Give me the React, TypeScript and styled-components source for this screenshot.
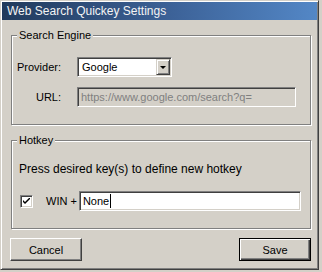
import styled, { createGlobalStyle } from "styled-components";

const GlobalStyle = createGlobalStyle`
  html, body {
    margin: 0;
    padding: 0;
    background: #d4d0c8;
  }
  body {
    font-family: "Liberation Sans", Arial, sans-serif;
    font-size: 11px;
    color: #000;
  }
`;

const Window = styled.div`
  box-sizing: border-box;
  width: 319px;
  height: 270px;
  padding: 1px;
  background: #d4d0c8;
  border: 1px solid;
  border-color: #d4d0c8 #404040 #404040 #d4d0c8;
  box-shadow: inset 1px 1px 0 #fff, inset -1px -1px 0 #808080;
  display: flex;
  flex-direction: column;
`;

const TitleBar = styled.div`
  height: 18px;
  padding-left: 5px;
  display: flex;
  align-items: center;
  background: linear-gradient(to right, #213a5c, #3d6399 55%, #5387c6);
  color: #f4f4f4;
  font-size: 12px;
`;

const Content = styled.div`
  flex: 1;
  display: flex;
  flex-direction: column;
  padding: 9px 6px 0 9px;
`;

const Group = styled.fieldset<{ $top?: number; $pad: string }>`
  margin: ${(p) => p.$top ?? 0}px 0 0 0;
  padding: ${(p) => p.$pad};
  border: 1px solid #808080;
  box-shadow: inset 1px 1px 0 #fff, 1px 1px 0 #fff;
  min-width: 0;
`;

const Legend = styled.legend`
  padding: 0 2px;
  margin-left: -2px;
  background: #d4d0c8;
  line-height: 13px;
`;

const FormGrid = styled.div`
  display: grid;
  grid-template-columns: 42px 1fr;
  column-gap: 16px;
  row-gap: 10px;
  align-items: center;
`;

const Label = styled.span`
  justify-self: end;
  white-space: nowrap;
`;

const sunken = `
  box-sizing: border-box;
  border: 1px solid;
  border-color: #808080 #fff #fff #808080;
  box-shadow: inset 1px 1px 0 #404040, inset -1px -1px 0 #d4d0c8;
`;

const Select = styled.div`
  ${sunken}
  width: 95px;
  height: 20px;
  background: #fff;
  display: flex;
  align-items: center;
  padding: 1px;
`;

const SelectValue = styled.span`
  flex: 1;
  padding-left: 3px;
`;

const DropButton = styled.span`
  box-sizing: border-box;
  width: 14px;
  height: 16px;
  background: #d4d0c8;
  border: 1px solid;
  border-color: #d4d0c8 #404040 #404040 #d4d0c8;
  box-shadow: inset 1px 1px 0 #fff, inset -1px -1px 0 #808080;
  display: flex;
  align-items: center;
  justify-content: center;
`;

const Arrow = styled.span`
  width: 0;
  height: 0;
  border-left: 3px solid transparent;
  border-right: 3px solid transparent;
  border-top: 3px solid #000;
  margin-top: 1px;
`;

const TextBox = styled.div<{ $disabled?: boolean; $width?: number }>`
  ${sunken}
  ${(p) => (p.$width ? `width: ${p.$width}px;` : "flex: 1;")}
  height: 20px;
  background: ${(p) => (p.$disabled ? "#d4d0c8" : "#fff")};
  color: ${(p) => (p.$disabled ? "#808080" : "#000")};
  display: flex;
  align-items: center;
  padding-left: 3px;
  white-space: nowrap;
  overflow: hidden;
`;

const Caret = styled.span`
  display: inline-block;
  width: 1px;
  height: 14px;
  background: #000;
  margin-left: 1px;
`;

const Hint = styled.div`
  line-height: 13px;
  font-size: 12px;
`;

const HotkeyRow = styled.div`
  margin-top: 15px;
  display: flex;
  align-items: center;
`;

const CheckBox = styled.span`
  ${sunken}
  flex-shrink: 0;
  width: 13px;
  height: 13px;
  margin-left: 1px;
  background: #fff;
  display: flex;
  align-items: center;
  justify-content: center;
`;

const WinLabel = styled.span`
  flex-shrink: 0;
  white-space: nowrap;
  margin: 0 2px 0 13px;
`;

const ButtonRow = styled.div`
  margin: 9px 0 0 -1px;
  display: flex;
  justify-content: space-between;
`;

const Button = styled.button<{ $default?: boolean }>`
  box-sizing: border-box;
  width: 72px;
  height: 23px;
  padding: 0;
  font-family: inherit;
  font-size: 11px;
  color: #000;
  background: #d4d0c8;
  border: 1px solid;
  border-color: ${(p) => (p.$default ? "#000" : "#fff #404040 #404040 #fff")};
  box-shadow: ${(p) =>
    p.$default
      ? "inset 1px 1px 0 #fff, inset -1px -1px 0 #404040, inset -2px -2px 0 #808080"
      : "inset -1px -1px 0 #808080"};
`;

export default function App() {
  return (
    <>
      <GlobalStyle />
      <Window>
        <TitleBar>Web Search Quickey Settings</TitleBar>
        <Content>
          <Group $pad="15px 12px 17px 7px">
            <Legend>Search Engine</Legend>
            <FormGrid>
              <Label>Provider:</Label>
              <Select>
                <SelectValue>Google</SelectValue>
                <DropButton>
                  <Arrow />
                </DropButton>
              </Select>
              <Label>URL:</Label>
              <TextBox $disabled $width={219}>
                https://www.google.com/search?q=
              </TextBox>
            </FormGrid>
          </Group>
          <Group $top={9} $pad="16px 9px 17px 7px">
            <Legend>Hotkey</Legend>
            <Hint>Press desired key(s) to define new hotkey</Hint>
            <HotkeyRow>
              <CheckBox>
                <svg width="7" height="7" viewBox="0 0 7 7">
                  <path d="M0 2 L0 4 L2 6 L7 1 L7 -1 L2 4 Z" fill="#000" />
                </svg>
              </CheckBox>
              <WinLabel>WIN +</WinLabel>
              <TextBox>
                None
                <Caret />
              </TextBox>
            </HotkeyRow>
          </Group>
          <ButtonRow>
            <Button>Cancel</Button>
            <Button $default>Save</Button>
          </ButtonRow>
        </Content>
      </Window>
    </>
  );
}
